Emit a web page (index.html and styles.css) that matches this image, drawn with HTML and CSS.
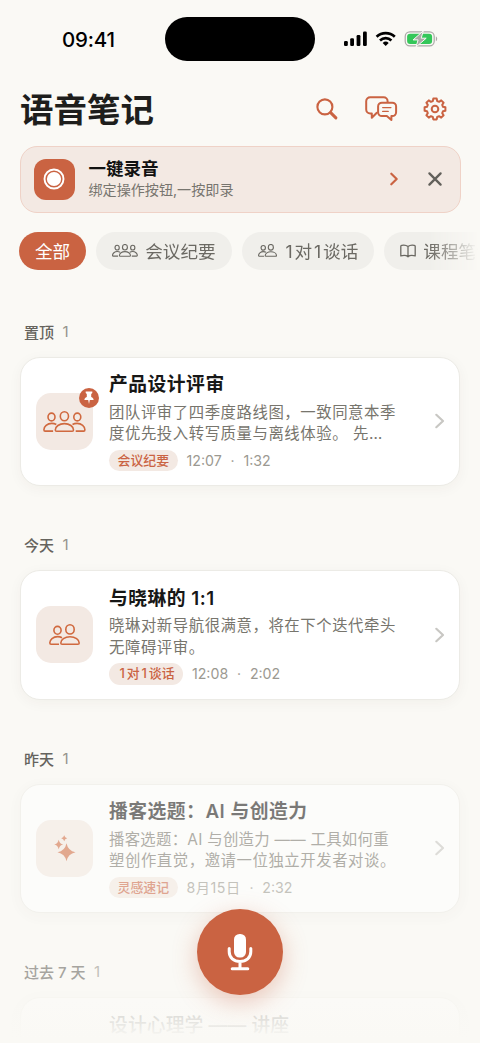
FILE: index.html
```html
<!DOCTYPE html>
<html lang="zh-CN">
<head>
<meta charset="utf-8">
<title>语音笔记</title>
<link rel="stylesheet" href="styles.css">
</head>
<body>
<svg width="0" height="0" class="defs">
  <symbol id="three" viewBox="0 0 43 21.4"><ellipse cx="21.4" cy="5.3" rx="4.1" ry="4.5"/><ellipse cx="8.5" cy="6" rx="3.5" ry="3.9"/><ellipse cx="34.3" cy="6" rx="3.5" ry="3.9"/><path d="M12.3 18.9c0-3.3 3.9-6.3 9.1-6.3s9.1 3 9.1 6.3c0 .9-.5 1.3-1.3 1.3H13.6c-.8 0-1.3-.4-1.3-1.3zM13.3 13.5c-1.2-.7-2.8-1.1-4.6-1.1-4.5 0-7.8 3.3-7.8 6.3 0 1 .4 1.4 1.2 1.4h8M29.5 13.5c1.2-.7 2.8-1.1 4.6-1.1 4.5 0 7.8 3.3 7.8 6.3 0 1-.4 1.4-1.2 1.4h-8"/></symbol>
  <symbol id="two" viewBox="0 0 31 21.4"><ellipse cx="21" cy="5.4" rx="4.2" ry="4.6"/><ellipse cx="8.5" cy="6.3" rx="3.6" ry="3.9"/><path d="M11.8 18.9c0-3.3 3.9-6.1 9.2-6.1s9.2 2.8 9.2 6.1c0 .9-.5 1.3-1.3 1.3H13.1c-.8 0-1.3-.4-1.3-1.3zM13 13.7c-1.2-.7-2.7-1.1-4.4-1.1-4.5 0-7.8 3.2-7.8 6.2 0 1 .4 1.4 1.2 1.4h8"/></symbol>
</svg>
<div class="phone">
  <div class="status">
    <span class="time">09:41</span>
    <div class="island"></div>
    <svg class="sys" width="96" height="18" viewBox="0 0 96 18">
      <rect x="1" y="11" width="3.8" height="5" rx="1.2"/><rect x="7.2" y="8.3" width="3.8" height="7.7" rx="1.2"/><rect x="13.6" y="5" width="3.8" height="11" rx="1.2"/><rect x="20" y="1.5" width="3.8" height="14.5" rx="1.2"/>
      <g fill="none" stroke="#000" stroke-width="2.7"><path d="M33.6 6.7a13.4 13.4 0 0 1 18.2 0"/><path d="M37 10.4a8.5 8.5 0 0 1 11.4 0"/></g>
      <path d="M42.7 16l-3-3.1a4.4 4.4 0 0 1 6 0z"/>
      <rect x="62.2" y="1.9" width="29" height="14" rx="4.6" fill="none" stroke="#aaa9a6" stroke-width="1.2"/><path d="M92.9 6.5c1.7.7 1.7 4 0 4.7z" fill="#aaa9a6"/>
      <rect x="64.1" y="3.7" width="25" height="10.4" rx="3" fill="#34c759"/>
      <path d="M80.3.9L70.1 9.9h5L73 17l10.200-8.800h-5z" fill="#aaa9a6" stroke="#faf9f5" stroke-width="1"/>
    </svg>
  </div>
  <header class="top">
    <h1>语音笔记</h1>
    <svg class="line" width="24" height="24" viewBox="0 0 24 24"><circle cx="9.9" cy="9.9" r="7.5" stroke-width="2.1"/><path d="M15.6 15.6l5.3 5.3" stroke-width="3"/></svg>
    <svg class="line chat" width="34" height="28" viewBox="0 0 34 28"><path d="M12.8 17.8L7.8 22.8v-4.300H6.200a4 4 0 0 1-4-4V6.200a4 4 0 0 1 4-4h13.400a4 4 0 0 1 4 4v.9"/><path d="M17.900 7.700h10.400a3.800 3.800 0 0 1 3.800 3.800v5.800a3.800 3.800 0 0 1-3.800 3.800h-.9v4l-4.600-4h-4.900a3.800 3.800 0 0 1-3.800-3.800v-5.800a3.800 3.800 0 0 1 3.800-3.800z"/><path d="M18.700 12.600h8.200M18.700 16.400h5.500" stroke-width="1.400"/></svg>
    <svg class="line" width="24" height="24" viewBox="-12 -12 24 24"><path d="M-2.2-8L-1.7-10.4H1.7L2.2-8 4.1-7.2 6.2-8.6 8.6-6.2 7.2-4.1 8-2.2 10.4-1.7V1.7L8 2.2 7.2 4.1 8.6 6.2 6.2 8.6 4.1 7.2 2.2 8 1.7 10.4H-1.7L-2.2 8-4.1 7.2-6.2 8.6-8.6 6.2-7.2 4.1-8 2.2-10.4 1.7V-1.7L-8-2.2-7.2-4.1-8.6-6.2-6.2-8.6-4.1-7.2z"/><circle r="3.3"/></svg>
  </header>
  <section class="banner">
    <div class="rec"><svg width="24" height="24" viewBox="0 0 24 24"><circle cx="12" cy="12" r="9.5" fill="none" stroke="#fff" stroke-width="1.9"/><circle cx="12" cy="12" r="7.1" fill="#fff"/></svg></div>
    <div class="banner-text"><b>一键录音</b><span>绑定操作按钮,一按即录</span></div>
    <svg class="line" width="12" height="16" viewBox="0 0 12 16"><path d="M3.3 2.7L8.7 8l-5.400 5.300" stroke-width="2.200"/></svg>
    <svg class="close" width="16" height="16" viewBox="0 0 16 16"><path d="M2.400 2.400l11.200 11.200M13.600 2.400L2.400 13.600"/></svg>
  </section>
  <nav class="chips">
    <span class="chip on">全部</span>
    <span class="chip"><svg width="26" height="13"><use href="#three"/></svg>会议纪要</span>
    <span class="chip"><svg width="19" height="13"><use href="#two"/></svg><span><span class="num">1</span>对<span class="num">1</span>谈话</span></span>
    <span class="chip"><svg class="book" width="16" height="14" viewBox="0 0 16 14"><path d="M8 12.700V2.500C6.200 1 3.800.9 1.700 1.300q-.9.2-.9 1v9.600C3.500 11.200 6.300 11.200 8 12.700zM8 2.500C9.800 1 12.200.9 14.300 1.300q.9.2.9 1v9.600C12.500 11.200 9.700 11.200 8 12.700z"/></svg>课程笔记</span>
  </nav>
  <main>
    <section class="group">
      <h2>置顶<i>1</i></h2>
      <article class="card">
        <div class="icon"><svg width="43" height="21.4"><use href="#three"/></svg>
          <div class="pin"><svg width="12" height="14" viewBox="0 0 12 14"><path d="M2.700.5h6.600v1.600L8.200 3v3c1.600.7 2.400 1.700 2.400 3.100H6.800l-.8 4-.8-4H1.400C1.400 7.700 2.200 6.700 3.800 6V3L2.700 2.100z"/></svg></div></div>
        <div class="body"><h3>产品设计评审</h3><p>团队评审了四季度路线图，一致同意本季<br>度优先投入转写质量与离线体验。 先…</p><div class="meta"><em>会议纪要</em><span>12:07</span><span class="dot">·</span><span>1:32</span></div></div>
        <svg class="go" width="12" height="16" viewBox="0 0 12 16"><path d="M2.300 1.800L9 8l-6.700 6.200"/></svg>
      </article>
    </section>
    <section class="group">
      <h2>今天<i>1</i></h2>
      <article class="card">
        <div class="icon"><svg width="31" height="21.4"><use href="#two"/></svg></div>
        <div class="body"><h3>与晓琳的 1:1</h3><p>晓琳对新导航很满意，将在下个迭代牵头<br>无障碍评审。</p><div class="meta"><em><span class="num">1</span>对<span class="num">1</span>谈话</em><span>12:08</span><span class="dot">·</span><span>2:02</span></div></div>
        <svg class="go" width="12" height="16" viewBox="0 0 12 16"><path d="M2.300 1.800L9 8l-6.700 6.200"/></svg>
      </article>
    </section>
    <section class="group">
      <h2>昨天<i>1</i></h2>
      <article class="card faded">
        <div class="icon"><svg class="spark" width="22" height="27" viewBox="0 0 22 27"><path d="M12.500 8.200Q14 15.700 21.500 17.200 14 18.700 12.500 26.200 11 18.700 3.500 17.200 11 15.700 12.500 8.200zM4.700 4.700Q5.500 8.700 9.200 9.500 5.500 10.300 4.700 14.300 3.900 10.300.2 9.500 3.900 8.700 4.700 4.700zM10.200.3Q10.800 2.700 13.200 3.300 10.800 3.900 10.200 6.300 9.600 3.900 7.200 3.300 9.600 2.700 10.200.3z"/></svg></div>
        <div class="body"><h3>播客选题：AI 与创造力</h3><p><span class="tight">播客选题：AI 与创造力 —— 工具如何重</span><br>塑创作直觉，邀请一位独立开发者对谈。</p><div class="meta"><em>灵感速记</em><span class="date">8月15日</span><span class="dot">·</span><span>2:32</span></div></div>
        <svg class="go" width="12" height="16" viewBox="0 0 12 16"><path d="M2.300 1.800L9 8l-6.700 6.200"/></svg>
      </article>
    </section>
    <section class="group">
      <h2 class="faded">过去 7 天<i>1</i></h2>
      <article class="card ghost"><div class="icon"></div><div class="body"><h3>设计心理学 —— 讲座</h3></div></article>
    </section>
  </main>
  <div class="shade"></div>
  <button class="mic" aria-label="录音"><svg width="28" height="40" viewBox="0 0 28 40"><rect x="8" y="2" width="12" height="23.500" rx="5.500" fill="#fff"/><path d="M3.200 16.500v3.300c0 5.800 4.600 9.700 10.800 9.700s10.800-3.900 10.800-9.700v-3.300M14 29.500v6.500M6.200 36.700h15.600" fill="none" stroke="#fff" stroke-width="3" stroke-linecap="round"/></svg></button>
</div>
</body>
</html>
```
FILE: styles.css
```css
* { box-sizing: border-box; }
body { margin: 0; background: #faf9f5; font-family: Inter, "Noto Sans CJK SC", sans-serif; color: #1e1e1c; }
.defs { position: absolute; }
.phone { position: relative; width: 480px; height: 1043px; overflow: hidden; }
h1, h2, h3, p { margin: 0; }
svg { flex: none; display: block; }
.line { fill: none; stroke: #ca6342; stroke-width: 2; stroke-linecap: round; stroke-linejoin: round; }

.status { height: 78px; display: grid; grid-template-columns: 165px 150px 165px; align-items: center; }
.time { padding-left: 62px; font-size: 20.5px; font-weight: 500; color: #000; letter-spacing: -.2px; }
.island { height: 44px; border-radius: 22px; background: #000; }
.sys { margin-left: 28px; }

.top { height: 62px; padding: 0 33px 0 20px; display: flex; align-items: center; }
.top h1 { flex: 1; padding-top: 2px; font-size: 33.5px; line-height: 60px; font-weight: 700; }
.chat { margin: 0 25.5px 0 25px; }

.banner { margin: 6px 19.5px 0 19.5px; height: 66.5px; padding: 0 17px 0 13px; display: flex; align-items: center; border: 1.5px solid #efd2c7; border-radius: 17px; background: #f3e9e3; }
.rec { width: 41px; height: 41px; border-radius: 12px; background: #ca6342; display: grid; place-items: center; }
.banner-text { flex: 1; padding-left: 14px; display: flex; flex-direction: column; }
.banner-text b { font-size: 17.5px; line-height: 22px; font-weight: 600; color: #111; }
.banner-text span { font-size: 14.1px; line-height: 20px; color: #77756f; }
.banner .line { margin-right: 27px; }
.close { stroke: #62605b; stroke-width: 2.3; stroke-linecap: round; }

.chips { margin-top: 19px; padding-left: 19px; display: flex; gap: 10px; width: 480px; overflow: hidden; -webkit-mask-image: linear-gradient(90deg, #000 430px, transparent 478px); mask-image: linear-gradient(90deg, #000 430px, transparent 478px); }
.chip { flex: none; height: 38px; padding: 0 16px; border-radius: 19px; background: #f0efeb; color: #6b6963; font-size: 17.6px; display: flex; align-items: center; gap: 7px; }
.chip svg, .icon svg { fill: none; stroke: currentColor; stroke-width: 1.6; }
.chip svg { stroke-width: 1.9; }
.chip .book { stroke-width: 1.3; stroke-linejoin: round; }
.chip.on { background: #ca6342; color: #fff; }
.num { padding: 0 1.9px; }

main { margin-top: 37px; }
.group { height: 213.5px; }
.group h2 { height: 50px; padding: 0 0 1px 24px; display: flex; align-items: center; gap: 8.5px; font-size: 15px; font-weight: 500; color: #65635d; }
.group i { font-style: normal; font-weight: 400; color: #96948c; }
.card { margin: 0 20px; height: 129.5px; padding: 14px 13.5px 14px 15px; display: flex; align-items: center; border: 1px solid #ecebe6; border-radius: 20px; background: #fff; box-shadow: 0 3px 14px rgba(60, 50, 20, .045); }
.icon { position: relative; flex: none; width: 57px; height: 57px; border-radius: 15px; background: #f3e9e3; color: #d0693f; display: grid; place-items: center; }
.icon .spark { fill: currentColor; stroke: none; }
.pin { position: absolute; right: -6px; top: -5px; width: 20px; height: 20px; border-radius: 50%; background: #ca6342; display: grid; place-items: center; }
.icon .pin svg { fill: #fff; stroke: none; }
.body { flex: 1; padding: 2px 0 0 16px; white-space: nowrap; }
.body h3 { font-size: 18.8px; line-height: 24px; font-weight: 600; letter-spacing: .5px; color: #171716; }
.body p { margin-top: 4.5px; font-size: 15.4px; line-height: 21.3px; letter-spacing: .55px; color: #77756d; }
.body .tight { letter-spacing: .28px; }
.meta { margin-top: 5px; height: 21.5px; display: flex; align-items: center; gap: 8.8px; font-size: 14.2px; color: #9b9991; }
.meta em { font-style: normal; font-weight: 500; font-size: 12.9px; line-height: 21.5px; padding: 0 8.6px; border-radius: 11px; background: #f3e9e3; color: #ca6342; }
.date { letter-spacing: .5px; }
.go { fill: none; stroke: #c8c7c3; stroke-width: 2.2; stroke-linecap: round; stroke-linejoin: round; }
.faded { opacity: .56; }
.ghost { opacity: .2; align-items: flex-start; }
.ghost .icon { visibility: hidden; }
.ghost h3 { letter-spacing: .1px; font-weight: 500; }

.shade { position: absolute; left: 0; right: 0; bottom: 0; height: 43px; background: linear-gradient(rgba(250, 249, 245, 0), #faf9f5 90%); }
.mic { position: absolute; left: 197px; top: 909px; width: 86px; height: 86px; padding: 0; border: 0; border-radius: 50%; background: #ca6342; box-shadow: 0 7px 24px rgba(202, 99, 66, .34); display: grid; place-items: center; }
```
